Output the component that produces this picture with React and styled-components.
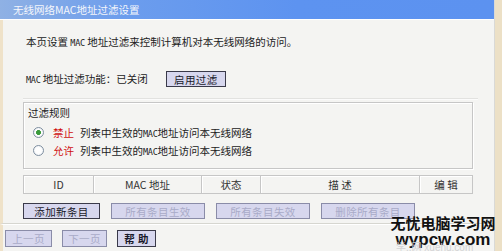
import React from "react";
import styled, { createGlobalStyle } from "styled-components";

const GlobalStyle = createGlobalStyle`
  html, body {
    margin: 0;
    padding: 0;
    background: #ede1c8;
  }
  body {
    font-family: "Noto Sans CJK SC", "DejaVu Sans", sans-serif;
    font-size: 10.5px;
    color: #222;
  }
`;

const columns = [
  { label: "ID", width: 70 },
  { label: "MAC 地址", width: 108 },
  { label: "状态", width: 59 },
  { label: "描 述", width: 159 },
  { label: "编 辑", width: 54 },
];

const rules = [
  { word: "禁止", checked: true },
  { word: "允许", checked: false },
];

function App() {
  return (
    <>
      <GlobalStyle />
      <Page>
        <Main>
          <TitleBar>无线网络MAC地址过滤设置</TitleBar>
          <Body>
            <Intro>
              本页设置 <Small>MAC</Small> 地址过滤来控制计算机对本无线网络的访问。
            </Intro>
            <StatusRow>
              <span>
                <Small>MAC</Small> 地址过滤功能：已关闭
              </span>
              <Button $w={60}>启用过滤</Button>
            </StatusRow>
            <Divider />
            <GroupBox>
              <GroupTitle>过滤规则</GroupTitle>
              {rules.map((r) => (
                <RuleRow key={r.word}>
                  <Radio checked={r.checked} />
                  <RuleWord>{r.word}</RuleWord>
                  <span>
                    列表中生效的<Small>MAC</Small>地址访问本无线网络
                  </span>
                </RuleRow>
              ))}
            </GroupBox>
            <Table>
              {columns.map((c) => (
                <HeadCell key={c.label} style={{ width: c.width }}>
                  {c.label}
                </HeadCell>
              ))}
            </Table>
            <ButtonRow>
              <Button $w={77}>添加新条目</Button>
              <Button $w={94} disabled>所有条目生效</Button>
              <Button $w={94} disabled>所有条目失效</Button>
              <Button $w={94} disabled>删除所有条目</Button>
            </ButtonRow>
          </Body>
          <BottomBar>
            <Button $w={47} $h={17} disabled>上一页</Button>
            <Button $w={45} $h={17} disabled>下一页</Button>
            <Button $w={39} $h={17} $strong>帮 助</Button>
          </BottomBar>
        </Main>
        <RightBand />
        <Watermark>
          <MarkTop>无忧电脑学习网</MarkTop>
          <MarkBottom>wypcw.com</MarkBottom>
        </Watermark>
        <Faint>学..网 xuehu.com</Faint>
      </Page>
    </>
  );
}

export default App;

const Page = styled.div`
  position: relative;
  display: flex;
  width: 502px;
  height: 251px;
  overflow: hidden;
`;

const Main = styled.div`
  display: flex;
  flex-direction: column;
  width: 494px;
  background: #f4f4f2;
  border-right: 1px solid #d9d9d6;
`;

const RightBand = styled.div`
  flex: 1;
  background: #ece0c6;
`;

const Small = styled.span`
  font-family: "DejaVu Sans Mono", monospace;
  font-size: 8.5px;
  letter-spacing: -0.3px;
`;

const TitleBar = styled.div`
  height: 19px;
  display: flex;
  align-items: center;
  padding-left: 13px;
  background: linear-gradient(90deg, #8fb1e4 0%, #6c9ded 25%, #5d93f0 60%, #5c92f0 100%);
  color: #f4f6fb;
  font-size: 10.5px;
  border-bottom: 1px solid #ffffff;
`;

const Body = styled.div`
  flex: 1;
  display: flex;
  flex-direction: column;
  align-items: flex-start;
  padding-left: 20px;
  border-left: 3px solid #efe2c9;
  border-bottom: 1px solid #d6d6d0;
`;

const Intro = styled.div`
  margin-top: 15px;
  padding-left: 3px;
  line-height: 14px;
`;

const StatusRow = styled.div`
  display: flex;
  align-items: center;
  gap: 18px;
  margin-top: 21px;
  padding-left: 3px;
  line-height: 14px;
`;

const Button = styled.button`
  box-sizing: border-box;
  width: ${({ $w }) => `${$w}px`};
  height: ${({ $h }) => ($h ? `${$h}px` : "16px")};
  padding: 0;
  display: flex;
  align-items: center;
  justify-content: center;
  font-family: inherit;
  font-size: 10.5px;
  font-weight: ${({ $strong }) => ($strong ? 700 : 400)};
  background: #d7d7ee;
  color: ${({ disabled }) => (disabled ? "#a9abc8" : "#1a1a2a")};
  border: 1px solid ${({ disabled }) => (disabled ? "#8a8ca8" : "#3a3a4a")};
  border-radius: 0;
  letter-spacing: 0.4px;
`;

const Divider = styled.div`
  width: 455px;
  height: 1px;
  margin-top: 11px;
  background: #e2e2e0;
  border-bottom: 1px solid #fbfbfb;
`;

const GroupBox = styled.div`
  box-sizing: border-box;
  width: 450px;
  height: 67px;
  margin-top: 2px;
  padding: 3px 0 0 4px;
  border: 1px solid #c6c6c6;
  box-shadow: inset 1px 1px 0 #ffffff, 1px 1px 0 #ffffff;
`;

const GroupTitle = styled.div`
  line-height: 14px;
  margin-bottom: 3px;
`;

const RuleRow = styled.div`
  display: flex;
  align-items: center;
  height: 18px;
  padding-left: 5px;
`;

const Radio = styled.span`
  box-sizing: border-box;
  width: 11px;
  height: 11px;
  margin-right: 9px;
  border-radius: 50%;
  border: 1px solid #7f8fa0;
  background: radial-gradient(circle, ${({ checked }) => (checked ? "#3a9a3a 0 2.2px," : "")} #ffffff 2.6px, #e6eaef 100%);
`;

const RuleWord = styled.span`
  color: #d01010;
  margin-right: 6px;
`;

const Table = styled.div`
  display: flex;
  margin-top: 6px;
  height: 19px;
  border-top: 1px solid #c6c6c6;
  border-left: 1px solid #c6c6c6;
  box-sizing: border-box;
  width: 450px;
`;

const HeadCell = styled.div`
  box-sizing: border-box;
  display: flex;
  align-items: center;
  justify-content: center;
  border-right: 1px solid #c6c6c6;
  border-bottom: 1px solid #c6c6c6;
  box-shadow: inset 1px 1px 0 #ffffff;
  color: #333;
  &:last-child {
    flex: 1;
  }
`;

const ButtonRow = styled.div`
  display: flex;
  gap: 11px;
  margin-top: 9px;
`;

const BottomBar = styled.div`
  display: flex;
  gap: 10px;
  height: 27px;
  box-sizing: border-box;
  padding: 5px 0 0 2px;
  border-left: 3px solid #efe2c9;
  border-top: 1px solid #ffffff;
`;

const Watermark = styled.div`
  position: absolute;
  left: 388px;
  top: 214px;
  width: 110px;
  display: flex;
  flex-direction: column;
  align-items: center;
  font-family: "Liberation Sans", "Noto Sans CJK SC", sans-serif;
  font-weight: 700;
  color: #111;
  white-space: nowrap;
`;

const Faint = styled.div`
  position: absolute;
  top: 243px;
  left: 396px;
  font-family: "Liberation Sans", "Noto Sans CJK SC", sans-serif;
  font-size: 10px;
  line-height: 10px;
  color: #d2d2d4;
  white-space: nowrap;
`;

const MarkTop = styled.div`
  font-family: "Noto Sans CJK SC", sans-serif;
  font-size: 15px;
  line-height: 18px;
`;

const MarkBottom = styled.div`
  font-size: 17px;
  line-height: 16px;
`;
